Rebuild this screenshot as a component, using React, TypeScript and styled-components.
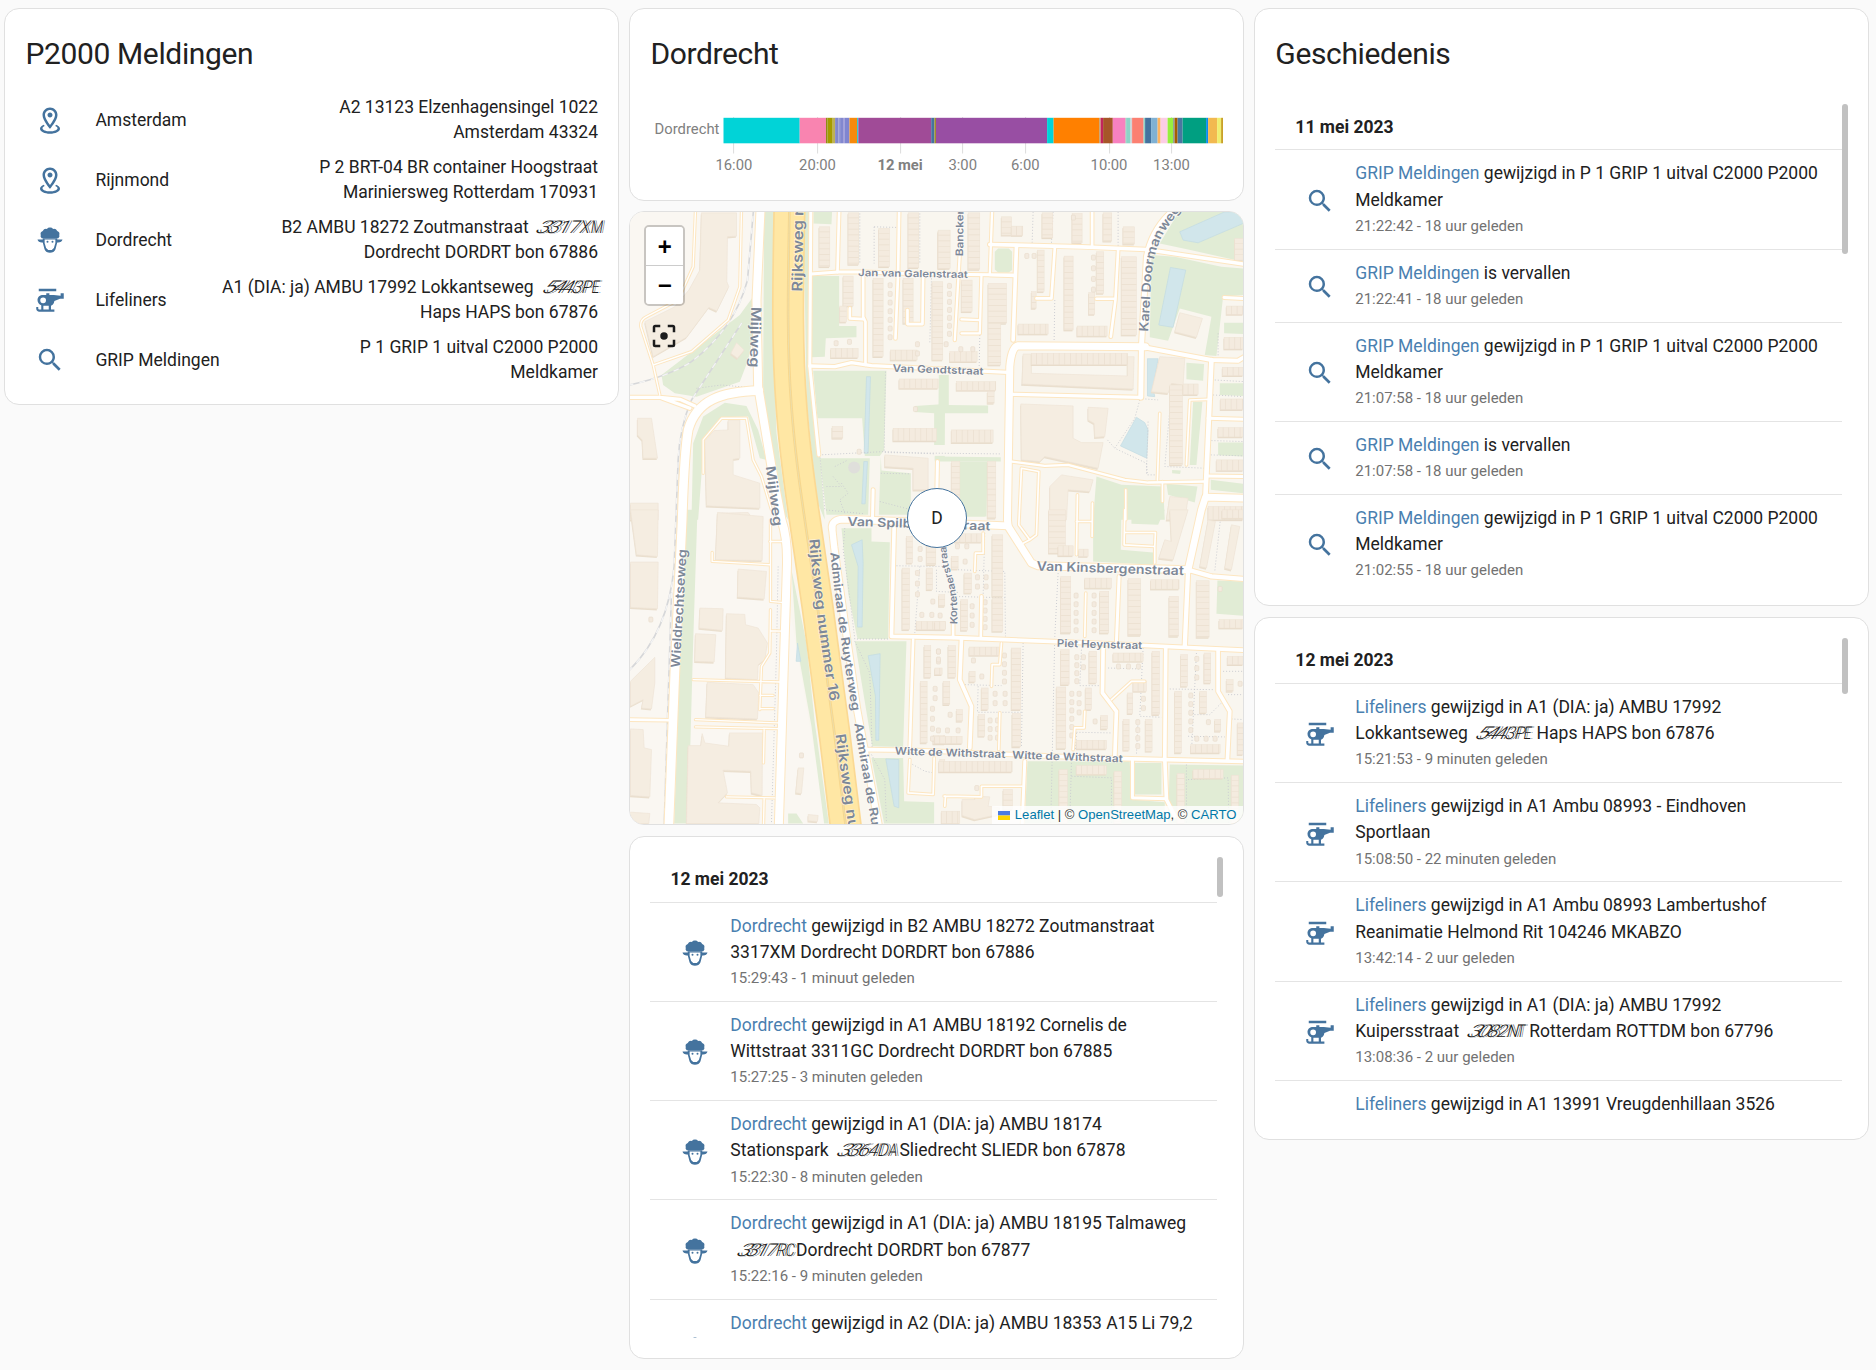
import React from "react";
import styled, { createGlobalStyle } from "styled-components";

const GlobalStyle = createGlobalStyle`
  *, *::before, *::after { box-sizing: border-box; }
  body {
    margin: 0;
    background: #fafafa;
    color: #212121;
    font-family: Roboto, "Noto Sans", sans-serif;
    font-size: 17.5px;
    line-height: 25px;
  }
`;

const Dashboard = styled.main`
  display: grid;
  grid-template-columns: repeat(3, 614.6px);
  column-gap: 10.4px;
  align-items: start;
  min-height: 1370px;
  padding: 8.4px 0 0 4.4px;
  overflow: hidden;
`;

const Column = styled.div`
  display: flex;
  flex-direction: column;
  gap: 10.3px;
  min-width: 0;
`;

const Card = styled.section`
  background: #fff;
  border: 1px solid #e0e0e0;
  border-radius: 15px;
  overflow: hidden;
`;

const CardTitle = styled.h1`
  margin: 0;
  height: 94.75px;
  padding: 15px 20px 0;
  font-size: 30px;
  font-weight: 400;
  line-height: 60px;
  letter-spacing: -0.36px;
`;

const EntityList = styled.div`
  display: flex;
  flex-direction: column;
  gap: 10px;
  margin-top: -9px;
  padding: 0 20px 19px;
`;

const EntityRow = styled.div`
  display: flex;
  align-items: center;
  height: 50px;
`;

const IconSlot = styled.div`
  display: flex;
  flex: none;
  align-items: center;
  justify-content: center;
  width: 50px;
  color: #44739e;
`;

const Glyph = styled.svg`
  display: block;
  width: 30px;
  height: 30px;
  fill: currentColor;
`;

const EntityName = styled.div`
  margin-left: 20px;
  white-space: nowrap;
`;

const EntityState = styled.div`
  flex: 1;
  text-align: right;
  white-space: nowrap;
`;

const WarpBox = styled.span<{ $width: number; $lead: number; $shift: number }>`
  display: inline-flex;
  width: ${(p) => p.$width}px;
  margin-left: ${(p) => p.$lead}px;
  margin-right: ${(p) => p.$shift}px;
  font-weight: 300;
  line-height: 20px;
  vertical-align: baseline;
`;

const WarpLetter = styled.span<{ $skew: number; $stretch: number }>`
  display: block;
  flex: 1;
  width: 0;
  text-align: center;
  text-shadow: 1.5px 0 0 #fff, 2.2px 0 0 #555;
  transform: skewX(${(p) => p.$skew}deg) scaleX(${(p) => p.$stretch});
`;

const TimelineBody = styled.div`
  padding: 0 20px;
  height: 95.8px;
`;

const Chart = styled.svg`
  display: block;
  width: 573px;
  height: 80px;
  overflow: visible;
  font-family: Roboto, sans-serif;
  font-size: 14.8px;
`;

const MapCard = styled(Card)`
  position: relative;
  height: 614px;
`;

const MapDrawing = styled.svg`
  display: block;
  width: 100%;
  height: 100%;
`;

const ZoomControl = styled.div`
  position: absolute;
  top: 13px;
  left: 14px;
  width: 41px;
  border: 2px solid rgba(0, 0, 0, 0.2);
  border-radius: 5px;
  background-clip: padding-box;
`;

const ZoomButton = styled.button`
  display: flex;
  align-items: center;
  justify-content: center;
  width: 37px;
  height: 38px;
  padding: 0;
  border: 0;
  background: #fff;
  color: #000;
  font: bold 22.5px "DejaVu Sans Mono", monospace;
  line-height: 37px;

  &:first-child {
    height: 39px;
    border-bottom: 1px solid #ccc;
    border-radius: 3px 3px 0 0;
  }
  &:last-child {
    border-radius: 0 0 3px 3px;
  }
`;

const FocusButton = styled.div`
  position: absolute;
  top: 108.5px;
  left: 19px;
  color: #1c1c1c;
`;

const Marker = styled.div`
  position: absolute;
  top: 276px;
  left: 276.7px;
  display: flex;
  align-items: center;
  justify-content: center;
  width: 60px;
  height: 60px;
  border: 1px solid #44739e;
  border-radius: 50%;
  background: #fff;
`;

const Attribution = styled.div`
  position: absolute;
  right: 0;
  bottom: 0;
  display: flex;
  align-items: center;
  height: 18px;
  padding: 0 6.5px 0 6px;
  background: rgba(255, 255, 255, 0.8);
  color: #333;
  font-family: "Liberation Sans", Arial, sans-serif;
  font-size: 13.1px;
  line-height: 18px;
  white-space: pre;
`;

const AttributionLink = styled.a`
  color: #0078a8;
`;

const Flag = styled.svg`
  width: 12.5px;
  height: 9px;
  margin-right: 4.5px;
`;

const LogBody = styled.div<{ $titled?: boolean }>`
  padding: ${(p) => (p.$titled ? "0" : "20px")} 20px 20px;
`;

const LogScroller = styled.div`
  position: relative;
  height: 481.25px;
  overflow: hidden;
`;

const ScrollThumb = styled.div<{ $size: number }>`
  position: absolute;
  top: 0;
  right: 0;
  width: 6px;
  height: ${(p) => p.$size}px;
  border-radius: 3px;
  background: #c1c1c1;
`;

const LogList = styled.div`
  width: 566.6px;
`;

const LogDate = styled.h4`
  margin: 0;
  height: 45.2px;
  padding: 9.5px 20px 0;
  font-size: 17.5px;
  font-weight: 700;
  line-height: 26.2px;
`;

const LogEntry = styled.article`
  display: flex;
  align-items: center;
  padding: 10px 0 9.7px 19.5px;
  border-top: 1px solid #e4e4e4;
  line-height: 26.2px;
`;

const LogIcon = styled(IconSlot)`
  padding-top: 2.4px;
  padding-left: 0.6px;
`;

const LogText = styled.div`
  margin-left: 10.4px;
  white-space: nowrap;
`;

const LogLine = styled.div`
  height: 26.2px;
`;

const EntityLink = styled.a`
  color: #4a7fb0;
`;

const LogTime = styled.div`
  height: 26.2px;
  color: #727272;
  font-size: 15px;
`;

type IconName = "marker" | "sheep" | "helicopter" | "magnify" | "focus";

const iconShapes: Record<IconName, React.ReactNode> = {
  marker: (
    <path d="M12 4C14.2 4 16 5.8 16 8C16 10.1 13.9 13.5 12 15.9C10.1 13.4 8 10.1 8 8C8 5.8 9.8 4 12 4M12 2C8.7 2 6 4.7 6 8C6 12.5 12 19 12 19S18 12.4 18 8C18 4.7 15.3 2 12 2M12 6C10.9 6 10 6.9 10 8S10.9 10 12 10 14 9.1 14 8 13.1 6 12 6M20 19C20 21.2 16.4 23 12 23S4 21.2 4 19C4 17.7 5.2 16.6 7.1 15.8L7.7 16.7C6.7 17.2 6 17.8 6 18.5C6 19.9 8.7 21 12 21S18 19.9 18 18.5C18 17.8 17.3 17.2 16.2 16.7L16.8 15.8C18.8 16.6 20 17.7 20 19Z" />
  ),
  sheep: (
    <>
      <path d="M12 2a3 3 0 0 0-2.500 1.100A3 3 0 0 0 6.200 4.800A2.600 2.600 0 0 0 4.600 8A2.200 2.200 0 0 0 5.400 10.600H18.600A2.200 2.200 0 0 0 19.400 8A2.600 2.600 0 0 0 17.800 4.800A3 3 0 0 0 14.500 3.100A3 3 0 0 0 12 2Z" />
      <path d="M2 11.600H7V14H5.500C3.700 14 2.300 13.100 2 11.600ZM22 11.600H17V14H18.500C20.300 14 21.700 13.100 22 11.600Z" />
      <path
        fillRule="evenodd"
        d="M6.200 10.500V14L7.600 19.400C8.200 21.300 10.100 22.200 12 22.200S15.800 21.300 16.400 19.400L17.800 14V10.500ZM7.700 11.500H16.300V14.300L15.100 18.400L13.400 19.900H10.600L8.900 18.400L7.700 14.300Z"
      />
      <circle cx="10" cy="13.300" r=".8" />
      <circle cx="14" cy="13.300" r=".8" />
    </>
  ),
  helicopter: (
    <path
      fillRule="evenodd"
      d="M3 3H17V5H3ZM9 6.500H11.500V8H15L20.500 8.500V6.500H23V11H20L15.500 12.800C15.300 15.300 13.500 16.500 12.800 16.500V19.500H15.500V21.300H3.500C2 21.300 1 20.300 1 19V17.500H2.600V18.800C2.600 19.300 2.900 19.500 3.400 19.500H5V16.200C3.200 15.500 2 13.900 2 12C2 9.500 4 8 6.500 8H9ZM6.500 9.900A2.300 2.300 0 1 0 6.500 14.500A2.300 2.300 0 1 0 6.500 9.900ZM6.700 16.500V19.500H11V16.500Z"
    />
  ),
  magnify: (
    <path d="M9.5,3A6.5,6.5 0 0,1 16,9.5C16,11.11 15.41,12.59 14.44,13.73L14.71,14H15.5L20.5,19L19,20.5L14,15.5V14.71L13.73,14.44C12.59,15.41 11.11,16 9.5,16A6.5,6.5 0 0,1 3,9.5A6.5,6.5 0 0,1 9.5,3M9.5,5C7,5 5,7 5,9.5C5,12 7,14 9.5,14C12,14 14,12 14,9.5C14,7 12,5 9.5,5Z" />
  ),
  focus: (
    <path d="M12,9A3,3 0 0,0 9,12A3,3 0 0,0 12,15A3,3 0 0,0 15,12A3,3 0 0,0 12,9M19,19H15V21H19A2,2 0 0,0 21,19V15H19M19,3H15V5H19V9H21V5A2,2 0 0,0 19,3M5,5H9V3H5A2,2 0 0,0 3,5V9H5M5,15H3V19A2,2 0 0,0 5,21H9V19H5V15Z" />
  ),
};

const Icon = ({ name }: { name: IconName }) => <Glyph viewBox="0 0 24 24">{iconShapes[name]}</Glyph>;

/* A postal code made illegible: the letters lean and stretch less towards the end. */
type WarpedProps = { text: string; width: number; lead?: number; shift?: number };
const Warped = ({ text, width, lead = 8, shift = 0 }: WarpedProps) => (
  <WarpBox $width={width} $lead={lead} $shift={shift}>
    {text.split("").map((ch, i) => (
      <WarpLetter key={i} $skew={-40 + i * 6} $stretch={1.4 - i * 0.12}>
        {ch}
      </WarpLetter>
    ))}
  </WarpBox>
);

const entities: { icon: IconName; name: string; lines: [React.ReactNode, React.ReactNode] }[] = [
  { icon: "marker", name: "Amsterdam", lines: ["A2 13123 Elzenhagensingel 1022", "Amsterdam 43324"] },
  { icon: "marker", name: "Rijnmond", lines: ["P 2 BRT-04 BR container Hoogstraat", "Mariniersweg Rotterdam 170931"] },
  {
    icon: "sheep",
    name: "Dordrecht",
    lines: [<>B2 AMBU 18272 Zoutmanstraat <Warped text="3317XM" width={60} lead={7} shift={-2} /></>, "Dordrecht DORDRT bon 67886"],
  },
  {
    icon: "helicopter",
    name: "Lifeliners",
    lines: [<>A1 (DIA: ja) AMBU 17992 Lokkantseweg <Warped text="5443PE" width={54} shift={-2} /></>, "Haps HAPS bon 67876"],
  },
  { icon: "magnify", name: "GRIP Meldingen", lines: ["P 1 GRIP 1 uitval C2000 P2000", "Meldkamer"] },
];

/* [start, colour] of every state, in pixels along the time axis */
const states: [number, string][] = [
  [723.4, "#01d3d7"], [799.6, "#f984b0"], [825.9, "#8f8a16"], [827.5, "#a59b00"], [832.6, "#bdb158"],
  [835, "#8288cf"], [838.5, "#979bd6"], [840, "#8288cf"], [843, "#9c97d6"], [844.3, "#8085d0"], [849.4, "#f58a0c"],
  [857, "#20c8d2"], [858.2, "#a04b97"], [931.1, "#44739e"], [934.3, "#a08a30"], [935.9, "#984ea3"],
  [1047, "#01d3d7"], [1053.5, "#ff8000"], [1099, "#c9a06a"], [1100.5, "#c2255c"], [1103, "#a65628"],
  [1112.7, "#f781bf"], [1125, "#c9b9bd"], [1126, "#8dd3c7"], [1130.5, "#d5d0d6"], [1132, "#fb8072"],
  [1143.5, "#8dd3c7"], [1145, "#44739e"], [1151, "#80b1d3"], [1157.5, "#fdb462"], [1160.5, "#fccde5"],
  [1167.5, "#97ee3f"], [1173, "#8a9a90"], [1174.5, "#a65b00"], [1177.5, "#4a76a0"], [1182.5, "#009f81"],
  [1206, "#0a8cf0"], [1208, "#f2b950"], [1217, "#f0ee70"], [1221, "#c9a227"], [1222.9, ""],
];
const ticks: [number, string][] = [
  [733.4, "16:00"], [817, "20:00"], [899.6, "12 mei"], [962.2, "3:00"], [1024.8, "6:00"], [1108.5, "10:00"], [1171, "13:00"],
];

const Timeline = () => (
  <Chart viewBox="649.900 104 573 80">
    {ticks.map(([x]) => (
      <rect key={x} x={Math.round(x)} y="117" width="1" height="36.500" fill="#dcdcdc" />
    ))}
    {states.slice(0, -1).map(([x, fill], i) => (
      <rect key={x} x={x} y="117.800" width={states[i + 1][0] - x} height="25.500" fill={fill} />
    ))}
    <text x="719.300" y="134" textAnchor="end" fill="#808080">Dordrecht</text>
    {ticks.map(([x, label]) => (
      <text key={x} x={x + 0.4} y="169.800" textAnchor="middle" fill="#808080" fontWeight={label === "12 mei" ? 700 : 400}>
        {label}
      </text>
    ))}
  </Chart>
);

/* The map sheet is split in four quarters, each 930 units wide and high. */
type Quarter = {
  x: number;
  y: number;
  greens: string[];
  water: string[];
  blocks: string[];
  rows: [number, number, number, number][];
  sheds: [number, number, number, number][];
};

const quarters: Quarter[] = [
  {
    x: 0, y: 0,
    greens: [
      "418,30 448,30 445,400 455,700 490,960 470,930 440,780 415,560",
      "110,525 345,345 385,290 385,410 370,480 345,545 215,590 150,580 115,555",
      "536,30 560,30 556,500 588,800 600,960 575,900 545,600", "566,30 622,30 620,72 566,70",
      "560,228 643,228 643,378 695,378 695,412 603,415 600,470 560,472",
      "565,512 785,512 778,750 765,768 720,768 712,655 578,655",
      "585,775 735,775 730,945 605,945", "768,770 770,812 858,820 858,900 850,945 762,945",
      "200,960 205,730 235,650 300,608 365,618 400,690 425,780 405,775 370,650 290,652 238,715 220,960",
      "870,618 960,612 960,735 928,735 928,640 870,636", "930,768 960,768 960,782 930,782",
    ],
    water: ["725,530 737,530 730,760 718,760", "717,785 728,785 721,912 711,912"],
    blocks: [
      "230,38 335,38 335,108 308,110 306,245 312,260 276,333 252,322 185,412 85,470 60,365 150,320 192,270 225,210",
      "38,655 80,655 98,775 55,775 52,720 38,705", "17,910 100,910 100,960 17,960",
      "240,722 268,692 310,690 310,660 345,660 345,775 325,778 325,825 405,850 405,925 245,918",
      "318,460 335,428 358,450 338,475", "780,765 910,775 910,870 865,870 865,805 780,800",
      "280,940 370,938 385,960 278,960",
    ],
    rows: [
      [583, 80, 32, 120], [670, 38, 32, 155], [762, 85, 32, 115], [850, 38, 32, 165], [745, 235, 30, 235],
      [655, 228, 30, 90], [645, 318, 20, 48], [835, 235, 30, 135], [618, 445, 82, 28], [797, 450, 80, 30],
      [922, 245, 32, 235], [823, 537, 117, 28], [622, 680, 32, 35], [805, 685, 130, 38], [940, 95, 24, 110],
    ],
    sheds: [[790, 248, 7, 26], [872, 425, 2, 28], [628, 422, 1, 20], [668, 418, 1, 20], [866, 620, 1, 10], [697, 748, 1, 10]],
  },
  {
    x: 930, y: 0,
    greens: [
      "735,30 925,30 925,185 760,148 675,130", "650,165 720,170 860,200 925,205 925,285 865,290 845,468 810,465 830,350 735,325 700,422 645,412",
      "180,155 190,145 222,145 232,155 232,210 222,217 190,217 180,208", "755,488 808,492 805,542 755,538",
      "855,550 925,550 925,588 855,585", "868,368 925,368 925,402 868,400", "775,605 803,605 785,795 765,795",
      "850,728 925,728 925,770 850,766", "12,525 42,525 42,615 160,617 160,640 30,640 28,730 10,730",
      "0,770 198,772 198,785 0,785", "75,785 158,785 155,950 75,950", "485,830 560,855 685,860 690,960 475,960",
      "695,852 788,860 780,908 700,885", "828,840 925,852 925,880 828,870", "712,810 738,812 736,822 712,820",
    ],
    water: [
      "735,95 870,35 925,35 925,70 790,128 745,120", "707,202 753,210 715,382 672,375",
      "638,476 670,476 655,565 660,590 638,588", "605,652 630,668 640,690 636,775 557,738",
    ],
    blocks: [
      "258,612 415,618 415,715 440,728 505,728 490,805 330,770 315,785 260,780",
      "460,622 520,625 510,710 480,712 478,670 460,660", "735,338 803,355 785,412 720,395",
      "675,470 750,475 745,555 710,550 700,580 650,575",
      "345,860 380,825 475,840 465,875 400,870 395,960 345,960", "705,890 760,895 750,960 695,960",
      "265,462 290,462 290,520 578,528 578,470 598,470 595,567 262,552",
    ],
    rows: [
      [10, 90, 36, 115], [100, 38, 35, 170], [200, 50, 30, 55], [230, 78, 34, 28], [322, 38, 32, 75], [412, 40, 30, 88], [505, 38, 26, 85],
      [565, 80, 34, 52], [160, 250, 55, 120], [160, 370, 38, 125], [308, 150, 20, 125], [290, 275, 14, 50],
      [388, 168, 27, 222], [485, 155, 22, 125], [462, 278, 18, 65], [560, 170, 45, 235], [250, 372, 90, 30],
      [427, 378, 90, 30], [80, 240, 32, 95], [45, 455, 82, 30], [65, 545, 118, 26], [158, 575, 20, 35],
      [50, 690, 125, 38], [290, 460, 288, 34], [705, 555, 38, 240], [745, 552, 45, 32], [875, 318, 50, 25], [868, 412, 57, 35],
      [863, 502, 62, 25], [857, 597, 68, 32], [850, 683, 75, 28], [845, 780, 80, 32], [50, 785, 25, 175],
      [158, 785, 25, 170], [820, 920, 105, 40], [900, 115, 25, 65],
    ],
    sheds: [[38, 250, 7, 24], [28, 425, 1, 28], [72, 440, 1, 20], [108, 440, 1, 20], [470, 165, 4, 32], [270, 160, 1, 20], [292, 160, 1, 20], [410, 45, 1, 20]],
  },
  {
    x: 0, y: 930,
    greens: [
      "185,0 218,0 205,400 190,942 148,942 165,450", "500,180 545,400 570,640 612,942 598,942 560,650 515,400",
      "650,55 740,55 740,95 795,97 790,388 698,388 670,250", "690,395 845,395 835,712 742,710",
      "740,745 835,745 838,875 928,878 928,942 778,942", "490,912 515,912 535,942 490,942",
    ],
    water: [
      "680,105 712,90 715,160 712,352 698,352 700,170", "730,438 766,432 762,692 753,692 752,560",
      "783,748 822,750 822,895 808,890", "518,400 528,455 514,455",
    ],
    blocks: [
      "17,0 100,0 98,140 35,135", "278,8 415,20 412,152 272,150", "340,178 425,185 418,268 338,262",
      "225,295 295,297 293,362 223,355", "212,372 273,375 268,457 210,455",
      "305,312 360,314 362,345 400,355 428,400 420,450 400,465 398,510 302,505",
      "247,518 385,525 402,550 398,628 243,622",
      "190,708 228,708 232,672 240,700 312,710 314,670 413,670 412,858 380,850 378,785 295,782 308,850 280,880 395,885 405,895 402,942 185,942",
      "17,157 100,157 98,297 17,293", "17,515 90,443 90,520 80,598 50,595 55,570 17,590",
      "17,658 55,660 58,715 80,720 75,862 17,858", "17,908 75,912 72,942 17,942",
      "520,775 537,775 530,852 513,850", "550,915 580,918 578,936 550,934",
    ],
    rows: [
      [845, 80, 18, 80], [905, 95, 28, 70], [832, 175, 22, 185], [905, 175, 18, 65], [875, 335, 85, 25],
      [898, 408, 20, 95], [887, 515, 20, 185], [925, 678, 35, 25], [945, 750, 15, 35],
    ],
    sheds: [[880, 110, 2, 30], [872, 182, 3, 32], [885, 308, 1, 20], [915, 308, 1, 20], [918, 268, 1, 20], [935, 418, 3, 30], [925, 530, 2, 28], [917, 590, 4, 30], [524, 730, 1, 20], [72, 322, 1, 20]],
  },
  {
    x: 930, y: 930,
    greens: [
      "475,0 560,0 558,120 655,128 655,165 475,155", "590,0 690,0 670,45 590,42", "848,212 925,215 925,318 845,312",
      "278,755 585,755 590,870 690,878 690,942 270,942", "705,765 925,768 925,942 700,942",
      "600,760 680,760 680,855 600,855", "75,0 150,0 150,20 75,20",
    ],
    water: [],
    blocks: [
      "705,0 760,0 715,150 672,145 690,90 710,95", "820,30 842,35 815,175 795,170", "890,45 915,50 890,180 870,175",
      "82,870 120,870 120,860 165,862 160,890 195,895 190,915 120,930 82,918",
    ],
    rows: [
      [60, 72, 80, 25], [172, 75, 32, 185], [88, 190, 22, 60], [342, 0, 50, 130], [370, 108, 45, 30], [432, 118, 28, 22],
      [378, 200, 30, 170], [450, 205, 80, 30], [495, 245, 27, 125], [580, 207, 38, 170], [648, 210, 85, 28],
      [703, 260, 28, 120], [785, 213, 38, 170], [853, 330, 72, 25], [172, 265, 32, 100], [78, 270, 20, 92],
      [40, 408, 22, 95], [103, 412, 90, 25], [230, 415, 28, 185], [232, 612, 25, 100], [25, 515, 20, 70],
      [0, 680, 82, 22], [140, 535, 20, 65], [130, 615, 20, 65], [378, 420, 25, 105], [463, 425, 22, 95],
      [365, 532, 28, 185], [452, 535, 18, 65], [535, 430, 90, 25], [652, 425, 22, 190], [738, 435, 20, 95],
      [808, 430, 20, 90], [720, 545, 20, 185], [795, 545, 20, 65], [878, 440, 47, 25], [425, 692, 90, 26],
      [565, 630, 18, 92], [632, 630, 20, 95], [768, 705, 88, 25], [578, 550, 16, 62], [595, 515, 40, 30],
      [498, 618, 20, 40], [908, 640, 17, 95], [12, 755, 220, 32], [425, 768, 90, 26], [775, 780, 90, 26],
      [373, 780, 25, 162], [538, 785, 22, 157], [727, 792, 22, 150], [890, 797, 22, 145], [205, 840, 28, 60],
      [20, 905, 55, 37], [875, 510, 20, 35], [840, 630, 18, 35], [862, 0, 63, 25], [50, 140, 20, 38], [0, 335, 32, 25], [12, 255, 18, 35],
      [65, 600, 18, 35], [0, 475, 22, 20], [103, 485, 18, 32],
    ],
    sheds: [
      [122, 195, 2, 28], [148, 195, 2, 28], [85, 148, 1, 20], [106, 282, 3, 28], [145, 270, 4, 25], [62, 102, 1, 10], [90, 102, 1, 10],
      [418, 250, 5, 26], [472, 250, 5, 26], [420, 435, 4, 24], [440, 435, 2, 30], [405, 545, 6, 25], [427, 545, 3, 28],
      [175, 545, 2, 28], [160, 625, 3, 26], [182, 625, 3, 26], [203, 430, 4, 26], [205, 545, 2, 28], [780, 440, 3, 28],
      [762, 550, 5, 26], [603, 630, 4, 24], [620, 560, 2, 28], [545, 463, 1, 20], [575, 463, 1, 20], [605, 463, 1, 20],
      [815, 630, 1, 20], [780, 680, 1, 20], [808, 680, 1, 20], [835, 680, 1, 20], [135, 493, 1, 20], [110, 445, 1, 20],
      [40, 608, 1, 20], [5, 655, 1, 20], [32, 655, 1, 20], [64, 655, 1, 20], [10, 310, 1, 20], [5, 418, 2, 24], [475, 628, 1, 20],
      [910, 515, 1, 20], [120, 828, 1, 10], [850, 230, 1, 10],
    ],
  },
];

/* [path, width of the white fill] */
const roads: [string, number][] = [
  ["M407,30L395,300L400,560L440,800L470,960Q490,1020 486,1110L462,1880", 24],
  ["M402,572C290,575 215,600 190,690Q178,760 172,960L150,1420L132,1880", 26],
  ["M10,592L105,592L165,598L210,618M105,592L195,625", 10],
  ["M558,30L555,500L582,765", 9],
  ["M558,222L640,216L715,216L900,222L1165,225", 9],
  ["M643,30L638,216M823,30L820,216L812,415M895,222L893,372L848,372L848,330M715,216L715,350L722,365L722,495M715,357L675,355L675,325", 8],
  ["M555,498L630,500L680,488L740,497L1150,517", 10],
  ["M1095,133L1370,140L1565,148L1870,194", 11],
  ["M1102,30L1095,225L1170,228M1070,225L1065,400L1010,400M1065,360L1010,358M1005,160L990,420", 7],
  ["M1175,140L1165,420", 11],
  ["M1562,440L1180,437Q1160,440 1155,500L1148,960L1150,980L1220,1090L1240,1098L1690,1110", 21],
  ["M1640,35Q1580,90 1565,170L1550,440L1548,592", 15],
  ["M1550,440L1760,480L1840,482L1860,470", 12],
  ["M1162,583L1548,592", 10],
  ["M1290,145L1280,295L1235,295M1480,150L1472,300L1458,410M1470,296L1415,296", 8],
  ["M1402,30L1402,135", 8],
  ["M1760,480L1742,890", 14], ["M1865,895L1742,892L1730,930L1690,1110", 20],
  ["M1750,655L1865,658M1745,828L1865,830M1798,292L1865,296", 9],
  ["M1162,785L1260,798L1330,795L1500,840L1570,848L1742,845", 7],
  ["M1605,640L1598,840M1750,598L1695,600L1685,795M1503,870L1503,960M1613,845L1613,905", 5],
  ["M1190,805L1182,975L1215,1020L1235,1005L1242,815L1190,805M1195,1030L1215,1020M1358,885L1355,1065M1403,910L1402,1010M1355,965L1402,965", 5],
  ["M1500,930L1498,1035L1590,1040L1592,998L1500,998M1590,1040L1590,1090", 5],
  ["M1150,978L1080,975L655,958Q620,960 622,985", 20],
  ["M622,985L628,1040L660,1270L697,1530L762,1880", 19],
  ["M745,870L743,960M938,785L935,930", 9],
  ["M808,985L800,1310L985,1314L1400,1330L1865,1352", 11],
  ["M1690,1110L1760,1130L1865,1138M1690,1110L1680,1340", 13],
  ["M1483,1130L1475,1325", 9],
  ["M1010,1320L1005,1440L1040,1520L1035,1645M1435,1345L1433,1480L1475,1535L1470,1675M1623,1345L1620,1675L1625,1800L1650,1850M1780,1350L1780,1475L1815,1535L1808,1680", 11],
  ["M985,1270L985,1315M1070,1190L1068,1310", 8],
  ["M725,1650L860,1652L1400,1675L1865,1686", 11],
  ["M865,1320L855,1645", 8], ["M1200,1685L1192,1880", 9],
  ["M1523,1680L1523,1795L1625,1798", 9],
  ["M855,1680L850,1780L925,1785L928,1675", 5],
  ["M1130,1330L1125,1395L1102,1395L1100,1460M1125,1540L1122,1650M1380,1535L1378,1585L1350,1585L1345,1650M1460,1500L1520,1445L1560,1445M1383,1180L1380,1310", 5],
  ["M1075,1000L1075,1060L1052,1060L1050,1115M958,1790L962,1790L1070,1792L1070,1760L1192,1760M960,1820L962,1790", 5],
  ["M10,1560L135,1562", 8],
  ["M205,1440L465,1447M212,1560L460,1570M212,1582L460,1587M262,1058L262,1085L435,1095M305,1792L450,1795M435,1025L470,1025M437,960L437,1205L470,1208M437,1230L435,1360L410,1400L405,1530M437,1293L470,1294M418,1590L416,1690M405,1487L445,1487M405,1527L445,1527M418,1795L416,1880", 4],
  ["M235,820L235,720L290,655L365,655L385,780L410,830L440,930", 4],
  ["M85,495L200,455L310,360L345,260L350,30M105,585L85,495L48,380Q45,360 65,350L160,300L205,200L212,30", 4],
];

const railways = [
  "M10,556Q130,530 200,485Q330,385 368,240L386,30",
  "M350,370L200,600Q165,680 160,780L148,1100Q130,1300 10,1415",
  "M140,1180L118,1880",
];

const footpaths = [
  "M705,40L705,190M748,80L820,82M748,80L748,190M885,40L885,190M920,235L915,430M782,515L778,755L585,765L600,930L720,942",
  "M625,830L650,860L605,860M650,850L670,880L645,900L660,940M630,800L670,780M768,820L858,822M765,905L860,930M780,755L930,762",
  "M780,758L1125,762M1225,35L1222,130M1285,35L1280,130M1480,35L1480,140M1290,300L1288,420M1065,405L1063,510M1190,555L1530,567",
  "M1535,595L1600,600M1545,600L1530,655L1470,745L1565,790L1568,825L1595,825M1448,720L1470,745M1570,665L1565,825M1640,575L1620,800L1740,805",
  "M1780,400L1780,470M1770,540L1860,545M1765,585L1860,590M1760,722L1860,725M1758,765L1860,768",
  "M660,985L655,1050L672,1170L690,1318L790,1318M690,1325L735,1420L742,1650M740,1665L780,1740L785,1870",
  "M460,1100L455,1360L440,1870M815,1098L960,1100M885,1100L870,1300M935,1110L935,1175L1000,1178",
  "M1080,990L1075,1190M1000,1110L1140,1115L1142,1310M985,1190L1140,1194M1300,1120L1290,1310L1278,1870M1195,1330L1190,1640",
  "M1020,1455L1130,1458M1060,1460L1058,1538L1195,1538M1370,1350L1365,1458L1430,1458M1555,1345L1545,1550L1610,1553M1450,1405L1550,1408",
  "M1635,1468L1765,1470M1715,1360L1700,1660M1700,1545L1755,1545L1790,1510M1795,1415L1860,1415M1810,1485L1860,1485M1820,1558L1860,1560M1690,1610L1800,1612",
  "M1355,1598L1460,1600M1355,1600L1352,1650M1540,1560L1535,1665M1340,1690L1335,1870M1340,1730L1460,1735L1460,1870M1685,1695L1685,1870M1690,1740L1810,1735L1812,1870M855,1690L900,1715L925,1720",
  "M1790,930L1770,1115M215,565L290,555L400,565M412,560L460,850",
];

const highway = "M494,20C490,240 485,430 500,620C510,760 525,860 540,960L578,1220L630,1610L664,1890";

type Label = { id: string; text: string; d: string; size: number; length?: number };
const labels: Label[] = [
  { id: "galen", text: "Jan van Galenstraat", d: "M700,228L1040,234", size: 30, length: 329 },
  { id: "gendt", text: "Van Gendtstraat", d: "M803,515L1090,525", size: 31, length: 273 },
  { id: "rijks1", text: "Rijksweg nummer 16", d: "M532,275L540,-240", size: 44, length: 492 },
  { id: "mijl1", text: "Mijlweg", d: "M379,320L374,520", size: 42, length: 182 },
  { id: "mijl2", text: "Mijlweg", d: "M423,800L449,1000", size: 40, length: 182 },
  { id: "wield", text: "Wieldrechtseweg", d: "M165,1405L187,1030", size: 38, length: 357 },
  { id: "rijks2", text: "Rijksweg nummer 16", d: "M553,1018Q575,1280 622,1540", size: 42, length: 492 },
  { id: "rijks3", text: "Rijksweg nummer 16", d: "M632,1605L705,2120", size: 42, length: 492 },
  { id: "adm1", text: "Admiraal de Ruyterweg", d: "M616,1058Q640,1290 688,1570", size: 36, length: 482 },
  { id: "adm2", text: "Admiraal de Ruyterweg", d: "M688,1572L775,2080", size: 36, length: 482 },
  { id: "spil", text: "Van Spilbergenstraat", d: "M667,978L1110,992", size: 37, length: 430 },
  { id: "kort", text: "Kortenaerstraat", d: "M997,1274C1002,1180 985,1140 970,1090Q962,1040 965,960", size: 30, length: 250 },
  { id: "kins", text: "Van Kinsbergenstraat", d: "M1235,1112L1690,1127", size: 39, length: 442 },
  { id: "heyn", text: "Piet Heynstraat", d: "M1296,1341L1570,1349", size: 32, length: 256 },
  { id: "witte1", text: "Witte de Withstraat", d: "M810,1665L1160,1676", size: 32, length: 332 },
  { id: "witte2", text: "Witte de Withstraat", d: "M1162,1677L1510,1689", size: 32, length: 332 },
  { id: "banck", text: "Banckertstraat", d: "M1015,168L1017,-120", size: 31, length: 250 },
  { id: "karel", text: "Karel Doormanweg", d: "M1570,395L1580,230Q1590,130 1630,80L1672,20", size: 38, length: 392 },
];

const CityMap = () => (
  <MapDrawing viewBox="15.500 35.500 1838 1838" preserveAspectRatio="none">
    <rect x="0" y="0" width="1900" height="1900" fill="#f9f6ef" />
    <path d="M0,0H420L400,560L500,1000L490,1200L610,1900H0Z" fill="#faf7f2" />
    {quarters.map((q) => (
      <g key={`${q.x}-${q.y}-land`} transform={`translate(${q.x} ${q.y})`}>
        {q.greens.map((p) => <polygon key={p} points={p} fill="#e1ecd5" />)}
        {q.water.map((p) => <polygon key={p} points={p} fill="#d1e6eb" stroke="#c1dbe3" strokeWidth="2" />)}
      </g>
    ))}
    <circle cx="688" cy="803" r="18" fill="#dfdfdb" />
    <g fill="none" stroke="#cbccd1" strokeWidth="3" strokeDasharray="3 6">
      {footpaths.map((d) => <path key={d} d={d} />)}
    </g>
    {quarters.map((q) => (
      <g key={`${q.x}-${q.y}-built`} transform={`translate(${q.x} ${q.y})`}>
        {q.blocks.map((p) => (
          <g key={p}>
            <polygon points={p} fill="#eadfce" transform="translate(-2 5)" />
            <polygon points={p} fill="#f5ede1" stroke="#efe4d6" strokeWidth="2" />
          </g>
        ))}
        {q.rows.map(([x, y, w, h]) => (
          <g key={`${x}-${y}`}>
            <rect x={x - 2} y={y + 4} width={w} height={h} fill="#e8dccb" />
            <rect x={x} y={y} width={w} height={h} fill="#f4ebdf" stroke="#ede2d3" strokeWidth="1.500" />
            {h > w ? (
              <line x1={x + w / 2} x2={x + w / 2} y1={y + 14} y2={y + h} stroke="#eadfd0" strokeWidth={w} strokeDasharray="2 15" />
            ) : (
              <line x1={x + 14} x2={x + w} y1={y + h / 2} y2={y + h / 2} stroke="#eadfd0" strokeWidth={h} strokeDasharray="2 15" />
            )}
          </g>
        ))}
        {q.sheds.map(([x, y, n, step]) =>
          Array.from({ length: n }, (_, i) => (
            <rect key={`${x}-${y}-${i}`} x={x} y={y + i * step} width="12" height="15" rx="3" fill="#f3eadf" stroke="#e8dccb" strokeWidth="2" />
          ))
        )}
      </g>
    ))}
    <g fill="none" strokeLinejoin="round" strokeLinecap="round">
      <g stroke="#d6d7d9" strokeWidth="5">{railways.map((d) => <path key={d} d={d} />)}</g>
      <g stroke="#f4f4f4" strokeWidth="4" strokeDasharray="14 22">{railways.map((d) => <path key={d} d={d} />)}</g>
      {roads.map(([d, w]) => <path key={d} d={d} stroke="#fde6c0" strokeWidth={w + 6} />)}
      {roads.map(([d, w]) => <path key={d} d={d} stroke="#fff" strokeWidth={w} />)}
      <path d={highway} stroke="#fbd994" strokeWidth="97" />
      <path d={highway} stroke="#ffe7a4" strokeWidth="87" />
      <path d={highway} stroke="#f7d68c" strokeWidth="8" />
      <path d={highway} stroke="#ebdfae" strokeWidth="2.500" />
    </g>
    <g fill="#7d8898" stroke="#fff" strokeOpacity=".55" strokeWidth="4" paintOrder="stroke" fontFamily="Inter, 'Open Sans', sans-serif" fontWeight="600">
      {labels.map((l) => (
        <React.Fragment key={l.id}>
          <path id={`road-${l.id}`} d={l.d} fill="none" stroke="none" />
          <text fontSize={l.size} textLength={l.length} lengthAdjust="spacingAndGlyphs">
            <textPath href={`#road-${l.id}`} textLength={l.length} lengthAdjust="spacingAndGlyphs">{l.text}</textPath>
          </text>
        </React.Fragment>
      ))}
    </g>
  </MapDrawing>
);

type Entry = { lines: React.ReactNode[]; time: string };
const dordrechtLog: Entry[] = [
  { lines: ["gewijzigd in B2 AMBU 18272 Zoutmanstraat", "3317XM Dordrecht DORDRT bon 67886"], time: "15:29:43 - 1 minuut geleden" },
  { lines: ["gewijzigd in A1 AMBU 18192 Cornelis de", "Wittstraat 3311GC Dordrecht DORDRT bon 67885"], time: "15:27:25 - 3 minuten geleden" },
  { lines: ["gewijzigd in A1 (DIA: ja) AMBU 18174", <>Stationspark <Warped text="3364DA" width={56} shift={-2} /> Sliedrecht SLIEDR bon 67878</>], time: "15:22:30 - 8 minuten geleden" },
  { lines: ["gewijzigd in A1 (DIA: ja) AMBU 18195 Talmaweg", <>&nbsp;<Warped text="3317RC" width={53} lead={6} shift={-2} /> Dordrecht DORDRT bon 67877</>], time: "15:22:16 - 9 minuten geleden" },
  { lines: ["gewijzigd in A2 (DIA: ja) AMBU 18353 A15 Li 79,2", ""], time: "" },
];
const gripLog: Entry[] = [
  { lines: ["gewijzigd in P 1 GRIP 1 uitval C2000 P2000", "Meldkamer"], time: "21:22:42 - 18 uur geleden" },
  { lines: ["is vervallen"], time: "21:22:41 - 18 uur geleden" },
  { lines: ["gewijzigd in P 1 GRIP 1 uitval C2000 P2000", "Meldkamer"], time: "21:07:58 - 18 uur geleden" },
  { lines: ["is vervallen"], time: "21:07:58 - 18 uur geleden" },
  { lines: ["gewijzigd in P 1 GRIP 1 uitval C2000 P2000", "Meldkamer"], time: "21:02:55 - 18 uur geleden" },
];
const lifelinerLog: Entry[] = [
  { lines: ["gewijzigd in A1 (DIA: ja) AMBU 17992", <>Lokkantseweg <Warped text="5443PE" width={53} lead={7} /> Haps HAPS bon 67876</>], time: "15:21:53 - 9 minuten geleden" },
  { lines: ["gewijzigd in A1 Ambu 08993 - Eindhoven", "Sportlaan"], time: "15:08:50 - 22 minuten geleden" },
  { lines: ["gewijzigd in A1 Ambu 08993 Lambertushof", "Reanimatie Helmond Rit 104246 MKABZO"], time: "13:42:14 - 2 uur geleden" },
  { lines: ["gewijzigd in A1 (DIA: ja) AMBU 17992", <>Kuipersstraat <Warped text="3082NT" width={54} lead={7.5} /> Rotterdam ROTTDM bon 67796</>], time: "13:08:36 - 2 uur geleden" },
  { lines: ["gewijzigd in A1 13991 Vreugdenhillaan 3526", ""], time: "" },
];

type LogbookProps = { title?: string; date: string; icon: IconName; name: string; entries: Entry[]; thumb: number };
const Logbook = ({ title, date, icon, name, entries, thumb }: LogbookProps) => (
  <Card>
    {title && <CardTitle>{title}</CardTitle>}
    <LogBody $titled={!!title}>
      <LogScroller>
        <LogList>
          <LogDate>{date}</LogDate>
          {entries.map((entry, i) => (
            <LogEntry key={i}>
              <LogIcon><Icon name={icon} /></LogIcon>
              <LogText>
                {entry.lines.map((line, n) => (
                  <LogLine key={n}>
                    {n === 0 && <><EntityLink>{name}</EntityLink>{" "}</>}
                    {line}
                  </LogLine>
                ))}
                <LogTime>{entry.time}</LogTime>
              </LogText>
            </LogEntry>
          ))}
        </LogList>
        <ScrollThumb $size={thumb} />
      </LogScroller>
    </LogBody>
  </Card>
);

export default function App() {
  return (
    <>
      <GlobalStyle />
      <Dashboard>
        <Column>
          <Card>
            <CardTitle>P2000 Meldingen</CardTitle>
            <EntityList>
              {entities.map((e) => (
                <EntityRow key={e.name}>
                  <IconSlot><Icon name={e.icon} /></IconSlot>
                  <EntityName>{e.name}</EntityName>
                  <EntityState>
                    <div>{e.lines[0]}</div>
                    <div>{e.lines[1]}</div>
                  </EntityState>
                </EntityRow>
              ))}
            </EntityList>
          </Card>
        </Column>
        <Column>
          <Card>
            <CardTitle>Dordrecht</CardTitle>
            <TimelineBody><Timeline /></TimelineBody>
          </Card>
          <MapCard>
            <CityMap />
            <ZoomControl>
              <ZoomButton>+</ZoomButton>
              <ZoomButton>−</ZoomButton>
            </ZoomControl>
            <FocusButton><Icon name="focus" /></FocusButton>
            <Marker>D</Marker>
            <Attribution>
              <Flag viewBox="0 0 12 8" preserveAspectRatio="none">
                <path fill="#4c7be1" d="M0 0h12v4H0z" />
                <path fill="#ffd500" d="M0 4h12v4H0z" />
              </Flag>
              <AttributionLink>Leaflet</AttributionLink>
              {" | © "}
              <AttributionLink>OpenStreetMap</AttributionLink>
              {", © "}
              <AttributionLink>CARTO</AttributionLink>
            </Attribution>
          </MapCard>
          <Logbook date="12 mei 2023" icon="sheep" name="Dordrecht" entries={dordrechtLog} thumb={40} />
        </Column>
        <Column>
          <Logbook title="Geschiedenis" date="11 mei 2023" icon="magnify" name="GRIP Meldingen" entries={gripLog} thumb={150} />
          <Logbook date="12 mei 2023" icon="helicopter" name="Lifeliners" entries={lifelinerLog} thumb={56} />
        </Column>
      </Dashboard>
    </>
  );
}
